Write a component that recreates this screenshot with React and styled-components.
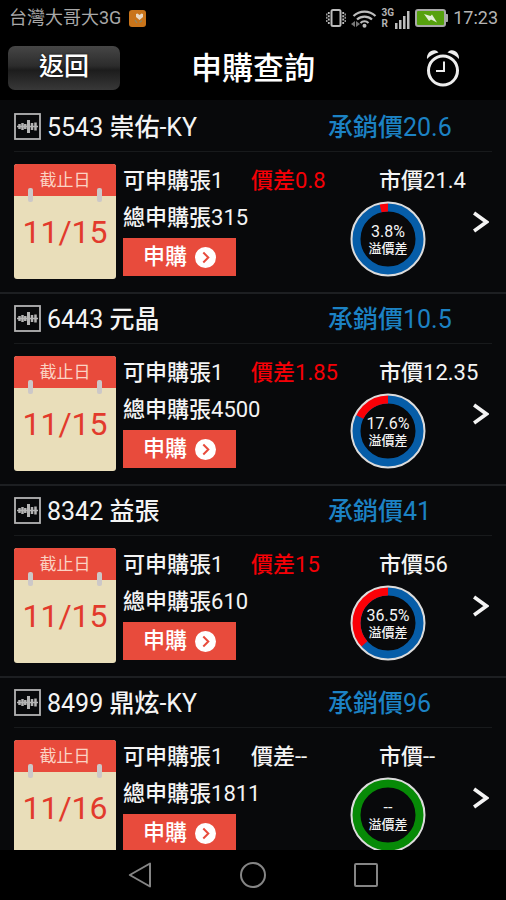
import styled, { createGlobalStyle } from "styled-components";

const stocks = [
  { id: "5543", name: "崇佑", suffix: "-KY", price: "20.6", date: "11/15", lots: "1", total: "315", diff: "0.8", market: "21.4", rate: 3.8 },
  { id: "6443", name: "元晶", price: "10.5", date: "11/15", lots: "1", total: "4500", diff: "1.85", market: "12.35", rate: 17.6 },
  { id: "8342", name: "益張", price: "41", date: "11/15", lots: "1", total: "610", diff: "15", market: "56", rate: 36.5 },
  { id: "8499", name: "鼎炫", suffix: "-KY", price: "96", date: "11/16", lots: "1", total: "1811", diff: null, market: null, rate: null },
];

const GlobalStyle = createGlobalStyle`
  * {
    box-sizing: border-box;
  }
  body {
    margin: 0;
    background-color: #000;
    font-family: Roboto, "Noto Sans CJK TC", sans-serif;
    color: #f4f4f4;
  }
  button {
    padding: 0;
    border: none;
    background: none;
    font-family: inherit;
    color: inherit;
    cursor: pointer;
  }
  svg {
    display: block;
    flex-shrink: 0;
  }
`;

const NoticeIcon = () => (
  <svg width="17" height="17" viewBox="0 0 17 17">
    <rect width="17" height="17" rx="3" fill="#c9741a" />
    <path d="M7 4l1.500-.5 2 1.500 2-1.500L14 4v3l-3.500 3L7 7z" fill="#e9d9c4" />
    <path d="M6 10l2 3M13 10.500l-2.500 2" stroke="#8c8a6a" strokeWidth="1.200" />
  </svg>
);

const VibrateIcon = () => (
  <svg width="20" height="18" viewBox="0 0 20 18" fill="none" stroke="#bdbdbd">
    <rect x="5.500" y="1" width="9" height="16" rx="1.500" strokeWidth="2" />
    <path d="M2.800 3v12M17.200 3v12" strokeWidth="1.800" strokeDasharray="2 1.300" />
    <path d="M.8 4.500v9M19.200 4.500v9" strokeWidth="1.200" strokeDasharray="2 1.300" />
  </svg>
);

const WifiIcon = () => (
  <svg width="26" height="19" viewBox="0 0 26 19" fill="none" stroke="#bdbdbd" strokeWidth="2.200">
    <path d="M2.500 7a16 16 0 0 1 22 0M6 10.500a11 11 0 0 1 15 0M9.500 14a6 6 0 0 1 8 0" />
    <circle cx="13.500" cy="16.800" r="2" fill="#bdbdbd" stroke="none" />
    <path d="M0 15l4-3v6zM9 15l-4-3v6z" fill="#777" stroke="none" />
  </svg>
);

const BarsIcon = () => (
  <svg width="15" height="18" viewBox="0 0 15 18" fill="#bdbdbd">
    <path d="M0 12h2.500v6H0zM4 9h2.500v9H4zM8 5h2.500v13H8zM12 0h2.500v18H12z" />
  </svg>
);

const BatteryIcon = () => (
  <svg width="33" height="18" viewBox="0 0 33 18">
    <rect x="1" y="1" width="29" height="16" rx="2" fill="#56a10e" stroke="#a9a9a9" strokeWidth="2" />
    <path d="M31 5.500h1.500v7H31z" fill="#a9a9a9" stroke="#a9a9a9" />
    <path d="M9 5l6.500 2 1.500-1.500 5 8-6-3-2 1.500z" fill="#e3eed8" />
  </svg>
);

const ClockIcon = () => (
  <svg width="34" height="38" viewBox="0 0 34 38" fill="none" stroke="#ededed">
    <circle cx="17" cy="21.500" r="14.500" strokeWidth="3" />
    <path d="M18 12.500v9.500h-8" strokeWidth="2" />
    <path
      d="M1 10C.5 5 4 1 8.500 1.200c2 .1 3 1 4 2.300C7.500 4.500 4 7 1 10zM33 10c.5-5-3-9-7.500-8.800-2 .1-3 1-4 2.300 5 1 8.500 3.500 11.500 6.500z"
      fill="#ededed"
      stroke="none"
    />
  </svg>
);

const WaveIcon = () => (
  <svg width="27" height="27" viewBox="0 0 27 27" fill="none" stroke="#b4b4b4">
    <rect x="1" y="1" width="25" height="25" strokeWidth="1.800" />
    <path d="M3 13.500h21" strokeWidth="1.500" />
    <path d="M5.500 11v5M8.500 10v7M11.300 11v5M18 10v7M21.500 9.500v8" strokeWidth="2.500" />
    <path d="M14.500 7v13" strokeWidth="3" />
  </svg>
);

const GoIcon = () => (
  <svg width="21" height="21" viewBox="0 0 21 21" fill="none">
    <circle cx="10.500" cy="10.500" r="10.500" fill="#fff" />
    <path d="M8.300 5.500l5 5-5 5" stroke="#e84b3c" strokeWidth="2" />
  </svg>
);

const ArrowIcon = () => (
  <svg width="16" height="22" viewBox="0 0 16 22" fill="none">
    <path d="M1 2L13.500 11 1 20" stroke="#f4f4f4" strokeWidth="3.800" />
  </svg>
);

const Donut = ({ rate }) => (
  <svg width="76" height="76" viewBox="0 0 76 76" fill="none">
    <circle cx="38" cy="38" r="32" stroke={rate === null ? "#078a07" : "#065da8"} strokeWidth="9" />
    {rate !== null && (
      <circle
        cx="38"
        cy="38"
        r="32"
        stroke="#fb0007"
        strokeWidth="9"
        pathLength="100"
        strokeDasharray={`${rate} 100`}
        transform="translate(76 0) scale(-1 1) rotate(-90 38 38)"
      />
    )}
    <circle cx="38" cy="38" r="36.500" stroke="#dcdcdc" strokeWidth="2" />
  </svg>
);

const Stock = ({ stock }) => (
  <Item>
    <ItemHead>
      <WaveIcon />
      <Name>
        {stock.id} <Label>{stock.name}</Label>
        {stock.suffix}
      </Name>
      <Price>
        <Label>承銷價</Label>
        {stock.price}
      </Price>
    </ItemHead>
    <ItemBody>
      <Calendar>
        <CalendarHead>截止日</CalendarHead>
        <Day>{stock.date}</Day>
        <Pin $side="left" />
        <Pin $side="right" />
      </Calendar>
      <Details>
        <Text>
          <Label>可申購張</Label>
          {stock.lots}
        </Text>
        <Text $rise={stock.diff !== null}>
          <Label>價差</Label>
          {stock.diff ?? "--"}
        </Text>
        <Text>
          <Label>市價</Label>
          {stock.market ?? "--"}
        </Text>
        <Text>
          <Label>總申購張</Label>
          {stock.total}
        </Text>
        <Gauge>
          <Ring>
            <Donut rate={stock.rate} />
            <RingLabel>
              <Rate>{stock.rate === null ? "--" : `${stock.rate}%`}</Rate>
              <Caption>溢價差</Caption>
            </RingLabel>
          </Ring>
          <More aria-label="詳細">
            <ArrowIcon />
          </More>
        </Gauge>
        <Apply>
          申購
          <GoIcon />
        </Apply>
      </Details>
    </ItemBody>
  </Item>
);

export default function App() {
  return (
    <Layout>
      <GlobalStyle />
      <StatusBar>
        <Carrier>台灣大哥大3G</Carrier>
        <NoticeIcon />
        <Signals>
          <VibrateIcon />
          <WifiIcon />
          <Network>
            <Mode>
              <span>3G</span>
              <span>R</span>
            </Mode>
            <BarsIcon />
          </Network>
          <BatteryIcon />
          <span>17:23</span>
        </Signals>
      </StatusBar>
      <Header>
        <Back>返回</Back>
        <Title>申購查詢</Title>
        <Alarm aria-label="提醒">
          <ClockIcon />
        </Alarm>
      </Header>
      <List>
        {stocks.map((i) => (
          <Stock key={i.id} stock={i} />
        ))}
      </List>
      <NavBar>
        <button aria-label="Back">
          <svg width="24" height="26" viewBox="0 0 24 26" fill="none" stroke="#858585" strokeWidth="2">
            <path d="M22 1.500v23L1.800 13z" strokeLinejoin="round" />
          </svg>
        </button>
        <button aria-label="Home">
          <svg width="26" height="26" viewBox="0 0 26 26" fill="none" stroke="#858585" strokeWidth="2">
            <circle cx="13" cy="13" r="12" />
          </svg>
        </button>
        <button aria-label="Recent">
          <svg width="24" height="24" viewBox="0 0 24 24" fill="none" stroke="#858585" strokeWidth="2">
            <rect x="1" y="1" width="22" height="22" rx="1" />
          </svg>
        </button>
      </NavBar>
    </Layout>
  );
}

const Layout = styled.div`
  display: flex;
  flex-direction: column;
  height: 100vh;
  overflow: hidden;
`;

const StatusBar = styled.div`
  display: flex;
  align-items: center;
  flex-shrink: 0;
  gap: 8px;
  height: 36px;
  padding: 0 8px 0 9px;
  font-size: 18px;
  line-height: 24px;
  color: #b4b4b4;
`;

const Carrier = styled.span`
  color: #a8a8a8;
`;

const Signals = styled.div`
  display: flex;
  align-items: center;
  gap: 5px;
  margin-left: auto;
`;

const Network = styled.div`
  display: flex;
  align-items: flex-end;
  gap: 1px;
`;

const Mode = styled.div`
  display: flex;
  flex-direction: column;
  font-size: 10px;
  font-weight: 700;
  line-height: 11px;
`;

const Header = styled.header`
  display: grid;
  grid-template-columns: 1fr auto 1fr;
  align-items: center;
  flex-shrink: 0;
  height: 64px;
  padding: 0 8px;
`;

const Back = styled.button`
  width: 112px;
  height: 44px;
  border-radius: 7px;
  background: linear-gradient(#464646, #2c2c2c 45%, #1c1c1c 55%, #383838);
  font-size: 25px;
  font-weight: 500;
  line-height: 40px;
  padding-bottom: 3px;
  color: #fff;
  text-shadow: 0 0 2px #000;
`;

const Title = styled.h1`
  margin: 0;
  padding-top: 2px;
  font-size: 31px;
  font-weight: 500;
  line-height: 40px;
  color: #fff;
`;

const Alarm = styled.button`
  justify-self: end;
  margin-right: 38px;
`;

const List = styled.main`
  flex: 1;
  min-height: 0;
  padding-top: 2px;
  overflow: hidden;
  background-color: #08090b;
`;

const Item = styled.section`
  height: 192px;
  padding: 0 14px;
  border-bottom: 2px solid #1d1f22;
`;

const ItemHead = styled.div`
  display: flex;
  align-items: center;
  gap: 6px;
  height: 50px;
  border-bottom: 1px solid #181a1c;
  font-size: 25px;
  line-height: 32px;
`;

const Label = styled.span`
  font-weight: 500;
`;

const Name = styled.h2`
  flex: 1;
  margin: 0;
  padding-top: 2px;
  font-size: 25px;
  font-weight: 400;
`;

const Price = styled.div`
  width: 164px;
  padding-top: 2px;
  color: #1c82c4;
`;

const ItemBody = styled.div`
  display: flex;
  gap: 7px;
  padding-top: 12px;
`;

const Calendar = styled.div`
  position: relative;
  flex-shrink: 0;
  width: 102px;
  height: 115px;
  border-radius: 3px;
  overflow: hidden;
  background-color: #e9deba;
  text-align: center;
`;

const CalendarHead = styled.div`
  height: 32px;
  background-color: #e84b3c;
  font-size: 17px;
  line-height: 32px;
  color: #fbd3c4;
`;

const Day = styled.div`
  font-size: 32px;
  line-height: 72px;
  color: #e23a2c;
`;

const Pin = styled.span`
  position: absolute;
  top: 24px;
  ${({ $side }) => $side}: 14px;
  width: 5px;
  height: 14px;
  border-radius: 2px;
  background-color: #ccc8c8;
`;

const Details = styled.div`
  display: grid;
  grid-template-columns: minmax(0, 1fr) minmax(0, 1fr) 110px;
  grid-template-rows: 34px 34px 38px;
  row-gap: 3px;
  flex: 1;
  min-width: 0;
  padding-right: 3px;
`;

const Text = styled.div`
  font-size: 22px;
  line-height: 34px;
  white-space: nowrap;
  color: ${({ $rise }) => ($rise ? "#f50006" : "#f4f4f4")};
`;

const Gauge = styled.div`
  display: flex;
  justify-content: flex-end;
  align-items: flex-start;
  gap: 47px;
  grid-area: 2 / 2 / 4 / 4;
`;

const Ring = styled.div`
  display: grid;
  place-items: center;

  & > * {
    grid-area: 1 / 1;
  }
`;

const RingLabel = styled.div`
  padding-top: 2px;
  text-align: center;
  line-height: 17px;
`;

const Rate = styled.div`
  font-size: 16px;
`;

const Caption = styled.div`
  font-size: 13px;
  font-weight: 500;
`;

const More = styled.button`
  margin-top: 10px;
`;

const Apply = styled.button`
  display: flex;
  align-items: center;
  justify-content: center;
  gap: 8px;
  grid-area: 3 / 1;
  width: 113px;
  background-color: #e84b3c;
  font-size: 22px;
  font-weight: 500;
  line-height: 30px;
  color: #fff;
`;

const NavBar = styled.nav`
  display: flex;
  align-items: center;
  justify-content: center;
  flex-shrink: 0;
  gap: 88px;
  height: 50px;
  background-color: #000;
`;
